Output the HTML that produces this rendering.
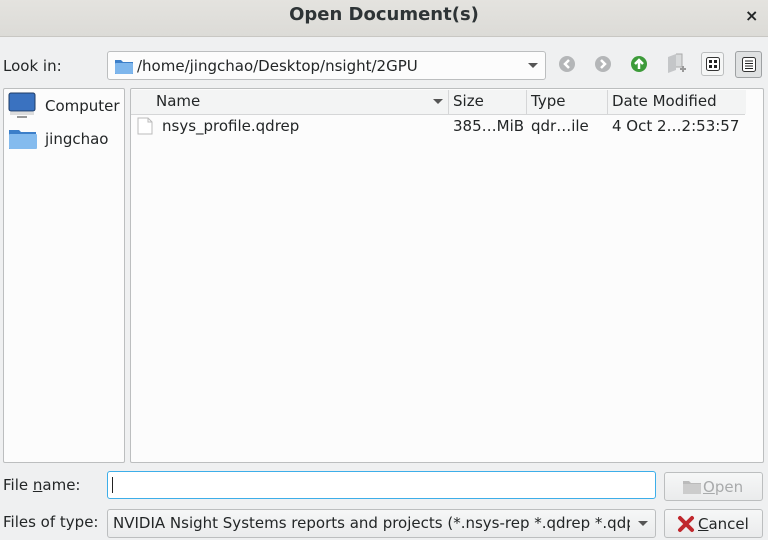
<!DOCTYPE html>
<html><head><style>
*{box-sizing:border-box;margin:0;padding:0}
body{width:768px;height:540px;background:#eff0f1;font-family:"DejaVu Sans","Liberation Sans",sans-serif;font-size:15px;color:#232627;position:relative;overflow:hidden}
.a{position:absolute;white-space:nowrap}
#title{left:0;top:0;width:768px;height:37px;background:linear-gradient(#e4e3df,#dcdbd7);border-bottom:1px solid #c8c7c3}
#title span{position:absolute;left:0;width:768px;text-align:center;top:4px;font-weight:bold;font-size:18px;color:#2e3436}
.box{position:absolute;background:#fcfcfc;border:1px solid #bcbebf;border-radius:3px}
.btn{position:absolute;background:linear-gradient(#f6f7f7,#eaebec);border:1px solid #bcbebf;border-radius:3px}
.hdr{position:absolute;top:1px;height:24px;border-right:1px solid #d5d6d7;padding-left:4px;line-height:22px;background:#f3f4f4}
</style></head><body>
<div id="title" class="a"><span>Open Document(s)</span><div class="a" style="left:745px;top:6px;font-weight:bold;font-size:16px">×</div></div>

<div class="a" style="left:3px;top:57px">Look in:</div>
<div class="btn" style="left:107px;top:51px;width:439px;height:29px;background:#fcfcfc">
 <svg class="a" style="left:6px;top:5px" width="20" height="18"><path d="M1 3h6l2 2h10v12H1z" fill="#3c7fc9"/><rect x="1" y="6" width="18" height="11" fill="#7eb6ec" rx="1"/></svg>
 <div class="a" style="left:29px;top:5px">/home/jingchao/Desktop/nsight/2GPU</div>
 <svg class="a" style="left:420px;top:11px" width="10" height="6"><path d="M0 0h10L5 5z" fill="#555"/></svg>
</div>
<svg class="a" style="left:558px;top:55px" width="18" height="18"><circle cx="9" cy="9" r="8" fill="#b4b6b8"/><path d="M11 5L7 9l4 4" stroke="#fff" stroke-width="2.5" fill="none"/></svg>
<svg class="a" style="left:594px;top:55px" width="18" height="18"><circle cx="9" cy="9" r="8" fill="#b4b6b8"/><path d="M7 5l4 4-4 4" stroke="#fff" stroke-width="2.5" fill="none"/></svg>
<svg class="a" style="left:630px;top:55px" width="18" height="18"><circle cx="9" cy="9" r="8" fill="#3d9b3a"/><path d="M9 14V6M5 9l4-4 4 4" stroke="#fff" stroke-width="2.5" fill="none"/></svg>
<svg class="a" style="left:666px;top:53px" width="20" height="22"><path d="M2 4l8-3v16l-8 3z" fill="#c4c6c8"/><path d="M10 1h6v13h-6" fill="#d8dadb" stroke="#aaa"/><path d="M14 16h6M17 13v6" stroke="#999" stroke-width="2"/></svg>
<div class="btn" style="left:701px;top:52px;width:23px;height:24px;background:#f5f6f6"><svg class="a" style="left:4px;top:4px" width="14" height="14"><rect x="0.5" y="0.5" width="13" height="13" rx="2" fill="#fff" stroke="#333"/><rect x="3" y="3" width="3" height="3" fill="#222"/><rect x="8" y="3" width="3" height="3" fill="#222"/><rect x="3" y="8" width="3" height="3" fill="#222"/><rect x="8" y="8" width="3" height="3" fill="#222"/></svg></div>
<div class="btn" style="left:735px;top:51px;width:27px;height:27px;background:#dfe1e2;border-color:#9ea1a3"><svg class="a" style="left:6px;top:5px" width="14" height="15"><rect x="0.5" y="0.5" width="13" height="14" rx="2" fill="#fff" stroke="#333"/><path d="M3 4h8M3 6.5h8M3 9h8M3 11.5h8" stroke="#222"/></svg></div>

<div class="box" style="left:3px;top:88px;width:122px;height:375px;border-radius:2px">
 <svg class="a" style="left:4px;top:3px" width="28" height="28"><rect x="1" y="1" width="26" height="18" rx="2" fill="#3a72c0" stroke="#1f3c66"/><rect x="2" y="20" width="24" height="3" fill="#ddd"/><rect x="9" y="24" width="10" height="2" fill="#999"/></svg>
 <div class="a" style="left:41px;top:8px">Computer</div>
 <svg class="a" style="left:4px;top:38px" width="30" height="24"><path d="M1 3h10l2 2h15v17H1z" fill="#3c7fc9"/><rect x="1" y="7" width="28" height="15" rx="1" fill="#84bbee"/></svg>
 <div class="a" style="left:41px;top:41px">jingchao</div>
</div>
<div class="box" style="left:130px;top:88px;width:634px;height:375px;border-radius:2px">
 <div class="hdr" style="left:0;width:318px;padding-left:25px">Name<svg class="a" style="left:302px;top:9px" width="10" height="6"><path d="M0 0h10L5 5z" fill="#555"/></svg></div>
 <div class="hdr" style="left:318px;width:78px">Size</div>
 <div class="hdr" style="left:396px;width:81px">Type</div>
 <div class="hdr" style="left:477px;width:138px;border-right:none">Date Modified</div>
 <div class="a" style="left:0;top:25px;width:614px;height:1px;background:#d5d6d7"></div>
 <svg class="a" style="left:6px;top:28px" width="16" height="18"><path d="M1 1h10l4 4v12H1z" fill="#fff" stroke="#bbb"/><path d="M11 1v4h4" fill="none" stroke="#bbb"/></svg>
 <div class="a" style="left:31px;top:28px">nsys_profile.qdrep</div>
 <div class="a" style="left:322px;top:28px">385…MiB</div>
 <div class="a" style="left:400px;top:28px">qdr…ile</div>
 <div class="a" style="left:481px;top:28px">4 Oct 2…2:53:57</div>
</div>

<div class="a" style="left:3px;top:476px">File <u>n</u>ame:</div>
<div class="box" style="left:107px;top:471px;width:549px;height:28px;border-color:#3daee9;background:#fff"><div class="a" style="left:4px;top:5px;width:1px;height:16px;background:#222"></div></div>
<div class="btn" style="left:664px;top:472px;width:99px;height:29px;color:#a8aaab"><svg class="a" style="left:17px;top:6px" width="20" height="16"><path d="M1 2h6l2 2h10v11H1z" fill="#bbb"/><rect x="1" y="5" width="18" height="10" fill="#ccc"/></svg><div class="a" style="left:38px;top:5px"><u>O</u>pen</div></div>

<div class="a" style="left:3px;top:513px">Files of type:</div>
<div class="btn" style="left:107px;top:509px;width:549px;height:29px;overflow:hidden">
 <div class="a" style="left:5px;top:4px;width:517px;overflow:hidden">NVIDIA Nsight Systems reports and projects (*.nsys-rep *.qdrep *.qdp</div>
 <svg class="a" style="left:530px;top:11px" width="10" height="6"><path d="M0 0h10L5 5z" fill="#555"/></svg>
</div>
<div class="btn" style="left:664px;top:509px;width:99px;height:29px"><svg class="a" style="left:12px;top:5px" width="18" height="18"><path d="M3 3l12 12M15 3L3 15" stroke="#c0282d" stroke-width="4" stroke-linecap="round"/></svg><div class="a" style="left:33px;top:5px"><u>C</u>ancel</div></div>
</body></html>
